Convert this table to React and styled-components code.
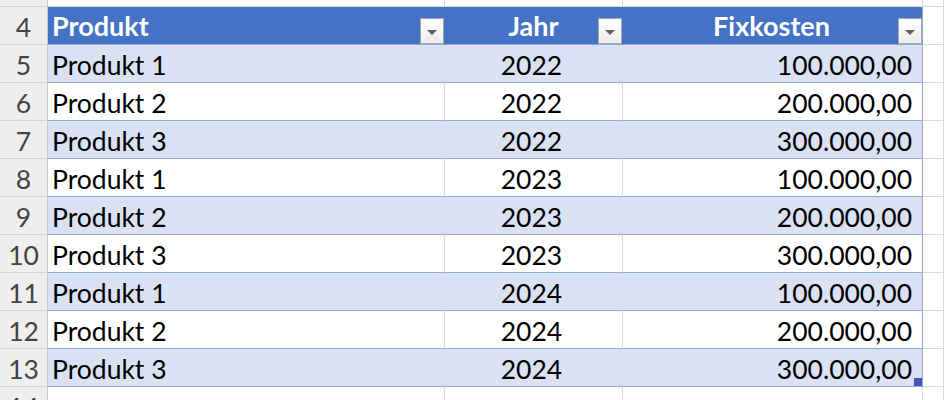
import React from "react";
import styled, { createGlobalStyle } from "styled-components";

const GlobalStyle = createGlobalStyle`
  html, body {
    margin: 0;
    padding: 0;
    background: #ffffff;
    overflow: hidden;
  }
  body {
    font-family: Lato, "Noto Sans", sans-serif;
  }
`;

const Sheet = styled.div`
  display: grid;
  grid-template-columns: 48px 397px 178px 300px 1fr;
  grid-template-rows: 7px repeat(10, 38px) 38px;
  width: 944px;
  height: 400px;
  overflow: hidden;
`;

const RowHead = styled.div`
  box-sizing: border-box;
  background: #efefef;
  border-right: 1px solid #c8c8c8;
  border-bottom: 1px solid #d6d6d6;
  color: #444444;
  font-size: 26.5px;
  padding-top: 3px;
  line-height: 35px;
  text-align: center;
  overflow: hidden;
`;

const Cell = styled.div`
  box-sizing: border-box;
  position: relative;
  background: ${(p) => (p.$band ? "#d9e1f2" : "#ffffff")};
  border-right: 1px solid
    ${(p) => (p.$edge ? "#8ea9db" : p.$band ? "#d9e1f2" : "#dadada")};
  border-bottom: 1px solid ${(p) => (p.$table ? "#8ea9db" : "#dadada")};
  color: #000000;
  font-size: 26.5px;
  line-height: 35px;
  text-align: ${(p) => p.$align || "left"};
  padding: 3px ${(p) => (p.$align === "right" ? "10px" : "4px")} 0
    ${(p) => (p.$align === "left" || !p.$align ? "4px" : "0")};
  white-space: nowrap;
  overflow: visible;
`;

const HeadCell = styled.div`
  box-sizing: border-box;
  position: relative;
  background: #4472c4;
  border-right: 1px solid ${(p) => (p.$edge ? "#8ea9db" : "#4472c4")};
  border-bottom: 1px solid #8ea9db;
  color: #ffffff;
  font-weight: 700;
  font-size: 27px;
  line-height: 37px;
  text-align: ${(p) => p.$align || "left"};
  padding: ${(p) =>
    p.$align === "right" ? "0 92px 0 0" : p.$align === "center" ? "0" : "0 0 0 4px"};
  white-space: nowrap;
`;

const FilterButton = styled.span`
  position: absolute;
  right: 0;
  bottom: 0;
  box-sizing: border-box;
  width: 24px;
  height: 26px;
  border: 1px solid #a6a6a6;
  background: linear-gradient(#ffffff, #ececec);
  &::after {
    content: "";
    position: absolute;
    left: 50%;
    top: 11px;
    margin-left: -5px;
    border-left: 5px solid transparent;
    border-right: 5px solid transparent;
    border-top: 5px solid #5f5f5f;
  }
`;

const ResizeHandle = styled.span`
  position: absolute;
  right: 0;
  bottom: 0;
  width: 8px;
  height: 8px;
  background: #4655b8;
`;

const rows = [
  ["Produkt 1", "2022", "100.000,00"],
  ["Produkt 2", "2022", "200.000,00"],
  ["Produkt 3", "2022", "300.000,00"],
  ["Produkt 1", "2023", "100.000,00"],
  ["Produkt 2", "2023", "200.000,00"],
  ["Produkt 3", "2023", "300.000,00"],
  ["Produkt 1", "2024", "100.000,00"],
  ["Produkt 2", "2024", "200.000,00"],
  ["Produkt 3", "2024", "300.000,00"],
];

export default function App() {
  return (
    <>
      <GlobalStyle />
      <Sheet>
        {/* row 3, only its lower edge shows */}
        <RowHead />
        <Cell />
        <Cell />
        <Cell />
        <Cell />

        <RowHead>4</RowHead>
        <HeadCell>
          Produkt
          <FilterButton />
        </HeadCell>
        <HeadCell $align="center">
          Jahr
          <FilterButton />
        </HeadCell>
        <HeadCell $align="right" $edge>
          Fixkosten
          <FilterButton />
        </HeadCell>
        <Cell />

        {rows.map((r, i) => {
          const band = i % 2 === 0;
          const last = i === rows.length - 1;
          return (
            <React.Fragment key={i}>
              <RowHead>{i + 5}</RowHead>
              <Cell $table $band={band}>
                {r[0]}
              </Cell>
              <Cell $table $band={band} $align="center">
                {r[1]}
              </Cell>
              <Cell $table $band={band} $align="right" $edge>
                {r[2]}
                {last && <ResizeHandle />}
              </Cell>
              <Cell />
            </React.Fragment>
          );
        })}

        <RowHead>14</RowHead>
        <Cell />
        <Cell />
        <Cell />
        <Cell />
      </Sheet>
    </>
  );
}
